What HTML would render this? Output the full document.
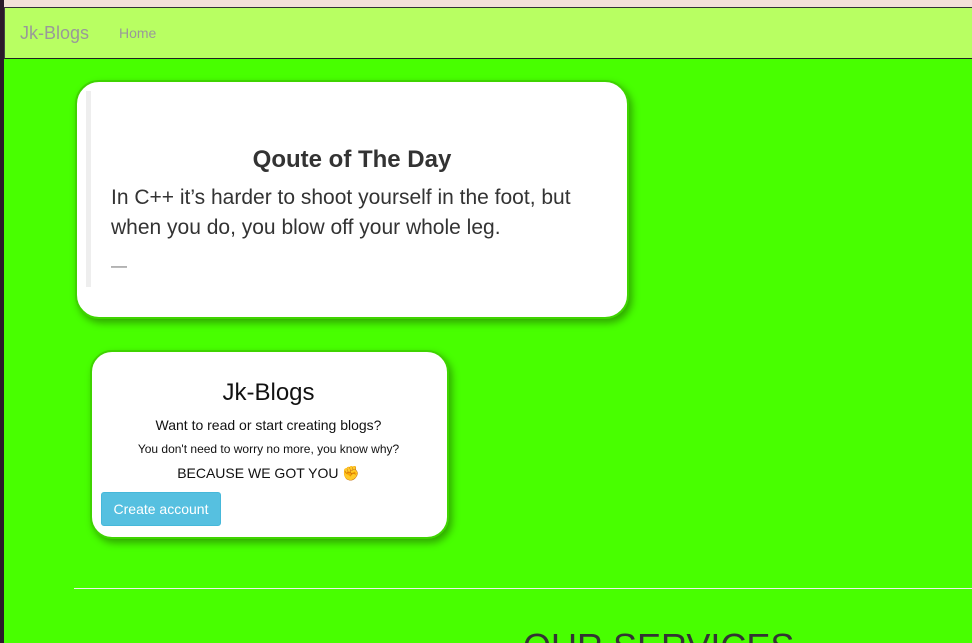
<!DOCTYPE html>
<html style="overflow:hidden;height:643px"><head><style>
body{margin:0;width:972px;height:643px;overflow:hidden;background:#48ff00;font-family:"Liberation Sans",sans-serif;position:relative}
.left{position:absolute;left:0;top:0;width:4px;height:643px;background:#2a1a2a}
.top{position:absolute;left:4px;top:0;right:0;height:7px;background:#f3e0d8}
.nav{position:absolute;left:4px;top:7px;right:0;height:50px;background:#b8ff62;border-top:1px solid #333;border-bottom:1px solid #222;border-left:1px solid #444}
.brand{position:absolute;left:15px;top:15px;font-size:18px;color:#999}
.home{position:absolute;left:114px;top:17px;font-size:14px;color:#999}
.card1{position:absolute;left:75px;top:80px;width:550px;height:235px;background:#fff;border:2px solid #3fd400;border-radius:24px;box-shadow:3px 4px 8px rgba(0,0,0,.35)}
.bq{position:absolute;left:9px;top:9px;width:5px;height:196px;background:#eee}
.card1 h3{position:absolute;left:0;right:0;top:64px;margin:0;text-align:center;font-size:24px;color:#333;font-weight:bold}
.card1 p{position:absolute;left:34px;top:101px;margin:0;width:490px;font-size:21px;line-height:30px;color:#333}
.dash{position:absolute;left:34px;top:176px;color:#777;font-size:16px}
.card2{position:absolute;left:90px;top:350px;width:355px;height:185px;background:#fff;border:2px solid #3fd400;border-radius:22px;box-shadow:3px 4px 8px rgba(0,0,0,.35);text-align:center;color:#111}
.t1{position:absolute;left:-2px;right:0;top:27px;font-size:24px}
.t2{position:absolute;left:-2px;right:0;top:65px;font-size:14px}
.t3{position:absolute;left:-2px;right:0;top:90px;font-size:12px}
.t4{position:absolute;left:-2px;right:0;top:113px;font-size:14px}
.btn{position:absolute;left:9px;top:140px;width:118px;height:32px;background:#56c0e0;border:1px solid #46b8da;border-radius:3px;color:#fff;font-size:14px;line-height:32px}
.hr{position:absolute;left:74px;right:0;top:588px;height:1px;background:#eee}
.os{position:absolute;left:523px;top:626px;font-size:36px;color:#333}
</style></head><body>
<div class="left"></div><div class="top"></div>
<div class="nav"><span class="brand">Jk-Blogs</span><span class="home">Home</span></div>
<div class="card1"><div class="bq"></div><h3>Qoute of The Day</h3><p>In C++ it’s harder to shoot yourself in the foot, but when you do, you blow off your whole leg.</p><div class="dash">—</div></div>
<div class="card2"><div class="t1">Jk-Blogs</div><div class="t2">Want to read or start creating blogs?</div><div class="t3">You don't need to worry no more, you know why?</div><div class="t4">BECAUSE WE GOT YOU <span style="color:#a0704a">✊</span></div><div class="btn">Create account</div></div>
<div class="hr"></div>
<div class="os">OUR SERVICES</div>
</body></html>
